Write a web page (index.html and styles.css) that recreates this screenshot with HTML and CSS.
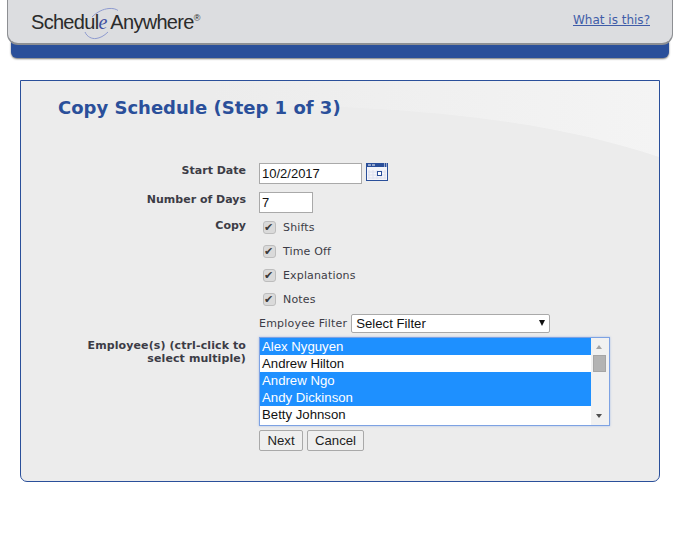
FILE: index.html

```html
<!DOCTYPE html>
<html lang="en">
<head>
    <meta charset="UTF-8">
    <meta name="viewport" content="width=device-width, initial-scale=1.0">
    <title>Copy Schedule</title>
    <link rel="stylesheet" href="styles.css">
</head>
<body>
    <div class="header">
        <div class="header-top">
            <div class="logo">
                <svg class="logo-swoosh" width="40" height="36" viewBox="0 0 40 36" aria-hidden="true">
                    <path d="M8 10 C13 5 19 2 25 1.5 C29 1.2 32 2 34 3.5" fill="none" stroke="#8f9bd0" stroke-width="1"/>
                    <path d="M1 25 C3 30 8 32 12 31.5 C16 31 20 29 24 25" fill="none" stroke="#8f9bd0" stroke-width="1"/>
                </svg>
                <span>Schedul<em>e</em></span> <span>Anywhere</span><sup>®</sup>
            </div>
            <a class="help-link" href="#">What is this?</a>
        </div>
        <div class="header-band"></div>
    </div>

    <div class="panel">
        <svg class="panel-shine" width="638" height="100" viewBox="0 0 638 100" aria-hidden="true">
            <defs>
                <linearGradient id="shine" x1="0" y1="0" x2="1" y2="0">
                    <stop offset="0.3" stop-color="#ececec"/>
                    <stop offset="1" stop-color="#f4f4f4"/>
                </linearGradient>
                <linearGradient id="fade" x1="0" y1="0" x2="0" y2="1">
                    <stop offset="0" stop-color="#fff"/>
                    <stop offset="0.75" stop-color="#fff"/>
                    <stop offset="1" stop-color="#888"/>
                </linearGradient>
                <mask id="shine-mask">
                    <rect width="638" height="100" fill="url(#fade)"/>
                </mask>
            </defs>
            <path d="M0 0 H638 V76 C560 50 470 34 340 27 C250 23 150 24 0 30 Z" fill="url(#shine)" mask="url(#shine-mask)"/>
        </svg>
        <h1>Copy Schedule (Step 1 of 3)</h1>

        <form class="form">
            <label class="form-label label-date" for="start-date">Start Date</label>
            <div class="date-field">
                <input class="text-input date-input" type="text" id="start-date" value="10/2/2017">
                <svg class="calendar" width="22" height="18" viewBox="0 0 22 18" aria-hidden="true">
                    <rect x="0.5" y="0.5" width="21" height="17" fill="#f4f5fa" stroke="#2a4f9a"/>
                    <rect x="0" y="0" width="22" height="4" fill="#2a4f9a"/>
                    <path d="M2 2h3M6 2h3" stroke="#fff"/>
                    <path d="M18 1h1M20 1h1M18 3h1M20 3h1" stroke="#fff"/>
                    <path d="M3 7v9M7 7v9M11 7v9M15 7v9M19 7v9M2 9h18M2 12h18M2 15h18" stroke="#dcdfee"/>
                    <rect x="11.5" y="8.5" width="4" height="4" fill="#fff" stroke="#2a4f9a"/>
                </svg>
            </div>

            <label class="form-label label-days" for="days">Number of Days</label>
            <input class="text-input days-input" type="text" id="days" value="7">

            <div class="form-label label-copy">Copy</div>
            <div class="checks">
                <label class="check"><input type="checkbox" checked> Shifts</label>
                <label class="check"><input type="checkbox" checked> Time Off</label>
                <label class="check"><input type="checkbox" checked> Explanations</label>
                <label class="check"><input type="checkbox" checked> Notes</label>
            </div>

            <div></div>
            <div class="filter">
                <label for="filter">Employee Filter</label>
                <span class="select-wrap">
                    <select id="filter"><option>Select Filter</option></select>
                    <span class="select-arrow"></span>
                </span>
            </div>

            <div class="form-label label-employees">Employee(s) (ctrl-click to select multiple)</div>
            <div class="listbox" role="listbox" aria-multiselectable="true">
                <ul class="list-items">
                    <li class="selected">Alex Nyguyen</li>
                    <li>Andrew Hilton</li>
                    <li class="selected">Andrew Ngo</li>
                    <li class="selected">Andy Dickinson</li>
                    <li>Betty Johnson</li>
                </ul>
                <div class="scrollbar">
                    <span class="arrow-up"></span>
                    <span class="thumb"></span>
                    <span class="arrow-down"></span>
                </div>
            </div>

            <div></div>
            <div class="buttons">
                <button class="btn-next" type="button">Next</button>
                <button class="btn-cancel" type="button">Cancel</button>
            </div>
        </form>
    </div>
</body>
</html>
```

FILE: styles.css

```css
body {
    margin: 0;
    background-color: #fff;
    font-family: "DejaVu Sans", Verdana, sans-serif;
    font-size: 11px;
    color: #3c3c46;
}
.header {
    padding: 0 7px;
}
.header-top {
    display: flex;
    justify-content: space-between;
    height: 45px;
    box-sizing: border-box;
    padding: 0 22px 0 23px;
    background-color: #dcdde0;
    border: solid #8d8f93;
    border-width: 0 1px 2px;
    border-radius: 0 0 11px 11px;
    position: relative;
    z-index: 1;
}
.header-band {
    height: 17px;
    margin: -4px 4px 0;
    background-color: #2a4f9a;
    border-radius: 0 0 6px 6px;
    box-shadow: 0 1px 2px rgba(0,0,0,0.55);
}
.logo {
    position: relative;
    margin-top: 10px;
    font-family: "Liberation Sans", Arial, sans-serif;
    font-size: 20px;
    letter-spacing: -0.7px;
    line-height: 24px;
    color: #2b2b2b;
    white-space: nowrap;
}
.logo em {
    font-family: "Liberation Serif", serif;
    color: #3f4f9f;
}
.logo sup {
    font-size: 9px;
    line-height: 0;
    vertical-align: 8px;
    letter-spacing: 0;
}
.logo-swoosh {
    position: absolute;
    left: 53px;
    top: -3px;
}
.help-link {
    margin-top: 12px;
    font-size: 12px;
    line-height: 16px;
    height: 17px;
    color: #3f5ca8;
}
.panel {
    position: relative;
    width: 640px;
    height: 402px;
    box-sizing: border-box;
    margin: 22px 0 0 20px;
    background-color: #ececec;
    border: 1px solid #2a4f9a;
    border-radius: 0 0 7px 7px;
    overflow: hidden;
}
.panel-shine {
    position: absolute;
    top: 0;
    left: 0;
    width: 100%;
}
h1 {
    position: relative;
    margin: 15px 0 0 37px;
    font-size: 18px;
    line-height: 24px;
    font-weight: bold;
    color: #2a4f9a;
}
.form {
    position: relative;
    display: grid;
    grid-template-columns: 225px 1fr;
    column-gap: 13px;
    margin-top: 43px;
}
.form-label {
    font-weight: bold;
    text-align: right;
    line-height: 13px;
}
.label-date { padding-top: 1px; }
.label-days { padding-top: 1px; }
.label-copy { padding-top: 6px; }
.label-employees {
    padding: 6px 0 0 56px;
    letter-spacing: 0.1px;
}
.date-field {
    display: flex;
    align-items: flex-start;
    gap: 4px;
    height: 29px;
}
.text-input {
    height: 21px;
    box-sizing: border-box;
    padding: 0 2px;
    border: 1px solid #a9a9a9;
    background-color: #fff;
    font-family: "Liberation Sans", Arial, sans-serif;
    font-size: 13px;
    color: #111;
}
.date-input {
    width: 103px;
}
.days-input {
    width: 54px;
}
.calendar {
    display: block;
}
.checks {
    display: flex;
    flex-direction: column;
    margin-top: 2px;
}
.check {
    display: flex;
    align-items: center;
    gap: 7px;
    height: 24px;
    padding-left: 4px;
    letter-spacing: 0.15px;
}
.check input {
    appearance: none;
    width: 13px;
    height: 13px;
    margin: 0;
    border: 1px solid #bdbdbd;
    border-radius: 3px;
    background-color: #dadada;
    position: relative;
}
.check input::before {
    content: "✔";
    position: absolute;
    left: 0;
    top: -1px;
    font-size: 11px;
    line-height: 13px;
    color: #3a3a3a;
}
.filter {
    display: flex;
    align-items: center;
    gap: 4px;
    height: 19px;
    margin-top: 3px;
    letter-spacing: 0.2px;
}
.select-wrap {
    position: relative;
    display: block;
}
.select-wrap select {
    display: block;
    appearance: none;
    width: 199px;
    height: 19px;
    box-sizing: border-box;
    padding: 0 4px;
    border: 1px solid #a9a9a9;
    border-radius: 2px;
    background-color: #fff;
    font-family: "Liberation Sans", Arial, sans-serif;
    font-size: 13.2px;
    color: #111;
}
.select-arrow {
    position: absolute;
    right: 5px;
    top: 6px;
    border-style: solid;
    border-width: 6px 3.5px 0;
    border-color: #111 transparent transparent;
}
.listbox {
    display: flex;
    width: 351px;
    height: 89px;
    box-sizing: border-box;
    margin-top: 4px;
    border: 1px solid #7da2e3;
    background-color: #fff;
    box-shadow: 0 0 2px rgba(125,162,227,0.6);
}
.list-items {
    flex: 1;
    margin: 0;
    padding: 0;
    list-style: none;
    font-family: "Liberation Sans", Arial, sans-serif;
    font-size: 13.2px;
    color: #111;
}
.list-items li {
    height: 17px;
    line-height: 17px;
    padding-left: 2px;
}
.list-items .selected {
    background-color: #1e90ff;
    color: #fff;
}
.scrollbar {
    position: relative;
    width: 18px;
    background-color: #f1f1f1;
}
.thumb {
    position: absolute;
    left: 2px;
    top: 17px;
    width: 13px;
    height: 17px;
    background-color: #b3b3b3;
    border: 1px solid #a5a5a5;
    box-sizing: border-box;
}
.arrow-up, .arrow-down {
    position: absolute;
    left: 5px;
    border-style: solid;
    border-color: transparent;
}
.arrow-up {
    top: 7px;
    border-width: 0 3.5px 4px;
    border-bottom-color: #a3a3a3;
}
.arrow-down {
    bottom: 7px;
    border-width: 4px 3.5px 0;
    border-top-color: #505050;
}
.buttons {
    display: flex;
    gap: 4px;
    margin-top: 4px;
}
button {
    height: 21px;
    padding: 0;
    border: 1px solid #a9a9a9;
    border-radius: 2px;
    background-color: #efefef;
    font-family: "Liberation Sans", Arial, sans-serif;
    font-size: 13.2px;
    color: #222;
}
.btn-next {
    width: 44px;
}
.btn-cancel {
    width: 57px;
}
```
